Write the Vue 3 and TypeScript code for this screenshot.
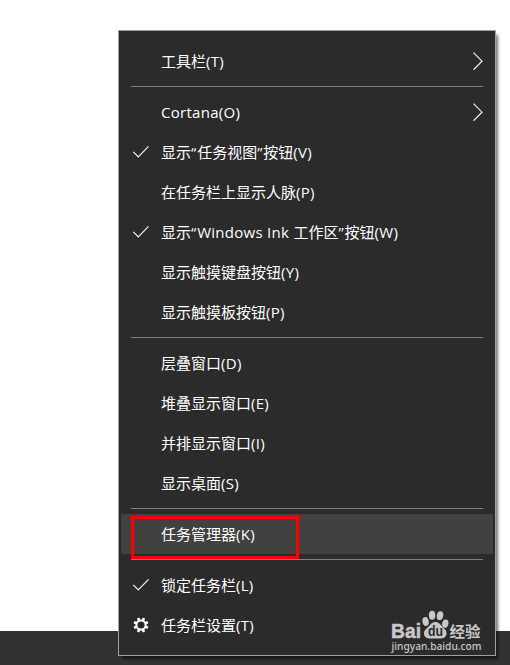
<script setup lang="ts">
interface Item {
  label: string
  icon?: 'check' | 'gear'
  submenu?: boolean
  active?: boolean
}

interface Run {
  text: string
  kind: 'cjk' | 'latin' | 'quote'
}

const groups: Item[][] = [
  [{ label: '工具栏(T)', submenu: true }],
  [
    { label: 'Cortana(O)', submenu: true },
    { label: '显示“任务视图”按钮(V)', icon: 'check' },
    { label: '在任务栏上显示人脉(P)' },
    { label: '显示“Windows Ink 工作区”按钮(W)', icon: 'check' },
    { label: '显示触摸键盘按钮(Y)' },
    { label: '显示触摸板按钮(P)' },
  ],
  [
    { label: '层叠窗口(D)' },
    { label: '堆叠显示窗口(E)' },
    { label: '并排显示窗口(I)' },
    { label: '显示桌面(S)' },
  ],
  [{ label: '任务管理器(K)', active: true }],
  [
    { label: '锁定任务栏(L)', icon: 'check' },
    { label: '任务栏设置(T)', icon: 'gear' },
  ],
]

// Latin letters and quotes are tracked slightly wider than the Chinese text.
function runs(label: string): Run[] {
  const parts = label.match(/[“”]|[\x20-\x7e]+|[^“”\x20-\x7e]+/g) ?? []
  return parts.map((text) => ({
    text,
    kind: /[“”]/.test(text) ? 'quote' : /[\x20-\x7e]/.test(text) ? 'latin' : 'cjk',
  }))
}

const teeth = [0, 45, 90, 135, 180, 225, 270, 315]
</script>

<template>
  <div class="screen">
    <div class="taskbar"></div>
    <nav class="menu">
      <div v-for="(group, g) in groups" :key="g" class="group">
        <div v-for="item in group" :key="item.label" class="row" :class="{ active: item.active }">
          <span class="icon">
            <svg v-if="item.icon === 'check'" width="18" height="16" viewBox="0 0 18 16">
              <path d="M1.3 7.8 L6.3 12.8 L16.5 2.4" fill="none" stroke="#f4f4f4" stroke-width="1.2" />
            </svg>
            <svg v-else-if="item.icon === 'gear'" class="gear" width="16" height="16" viewBox="-8 -8 16 16">
              <circle r="4.6" fill="none" stroke="#fff" stroke-width="2" />
              <rect
                v-for="angle in teeth"
                :key="angle"
                x="-1.35"
                y="-7.5"
                width="2.7"
                height="2.8"
                fill="#fff"
                :transform="`rotate(${angle + 22.5})`"
              />
            </svg>
          </span>
          <span class="label"><span v-for="(run, r) in runs(item.label)" :key="r" :class="run.kind">{{ run.text }}</span></span>
          <svg v-if="item.submenu" class="arrow" width="12" height="18" viewBox="0 0 12 18">
            <path d="M1.5 0.7 L10 9.2 L1.5 17.7" fill="none" stroke="#f4f4f4" stroke-width="1.2" />
          </svg>
          <span v-if="item.active" class="marker"></span>
        </div>
      </div>
    </nav>
    <svg class="watermark" width="96" height="48" viewBox="0 0 96 48">
      <g fill="#c8c8c8">
        <text class="brand" x="1" y="30" textLength="30" lengthAdjust="spacingAndGlyphs">Bai</text>
        <ellipse cx="35.6" cy="13.5" rx="3.1" ry="4.4" transform="rotate(-12 35.6 13.5)" />
        <ellipse cx="42.1" cy="7.3" rx="3.2" ry="4.5" />
        <ellipse cx="50" cy="7.7" rx="3.2" ry="4.4" transform="rotate(10 50 7.7)" />
        <ellipse cx="55.3" cy="15.7" rx="3.1" ry="4.2" transform="rotate(12 55.3 15.7)" />
        <path d="M45.5 14c3.3 0 4.8 2.6 7 5 2.3 2.200 4 3.300 4 6.300 0 3.200-2.300 5.200-5.500 5.200H39.500c-3.300 0-5.500-2-5.500-5.200 0-3 2-4.100 4.200-6.300 2.300-2.400 4-5 7.300-5z" />
      </g>
      <text class="du" x="38" y="28" textLength="15" lengthAdjust="spacingAndGlyphs">du</text>
      <text class="jing" x="59.5" y="29" textLength="31" lengthAdjust="spacingAndGlyphs">经验</text>
      <text class="url" x="1.5" y="42" textLength="90" lengthAdjust="spacingAndGlyphs">jingyan.baidu.com</text>
    </svg>
  </div>
</template>

<style>
body {
  background: #fff;
}
</style>

<style scoped>
.screen {
  position: relative;
  box-sizing: border-box;
  width: 510px;
  height: 665px;
  padding: 30px 14px 9px 118px;
  overflow: hidden;
}
.taskbar {
  position: absolute;
  left: 0;
  right: 0;
  bottom: 0;
  height: 34px;
  background: #323232;
}
.menu {
  position: relative;
  box-sizing: border-box;
  width: 378px;
  height: 626px;
  padding: 10px 2px;
  border: 1px solid #a0a0a0;
  background: #2b2b2b;
  box-shadow: 3px 4px 3px -1px rgba(0, 0, 0, 0.55);
}
.group + .group::before {
  content: '';
  display: block;
  height: 1px;
  margin: 5px 10px;
  background: #808080;
}
.row {
  position: relative;
  display: flex;
  align-items: center;
  height: 40px;
  color: #fff;
}
.row.active {
  background: #414141;
}
.icon {
  display: flex;
  flex: none;
  width: 29px;
  padding-left: 11px;
}
.gear {
  margin-left: 1px;
}
.label {
  flex: 1;
  font: 15px/20px 'Open Sans', 'Noto Sans CJK SC', sans-serif;
  white-space: pre;
}
.latin {
  letter-spacing: 0.28px;
}
.quote {
  letter-spacing: 0.9px;
}
.arrow {
  flex: none;
  margin: 0 9px 1px 0;
}
.marker {
  position: absolute;
  left: 10px;
  top: 2px;
  box-sizing: border-box;
  width: 168px;
  height: 43px;
  border: 3px solid #f00;
  z-index: 1;
}
.watermark {
  position: absolute;
  left: 390px;
  top: 608px;
  overflow: visible;
}
.brand {
  font: bold 20px 'Liberation Sans', sans-serif;
  stroke: #c8c8c8;
  stroke-width: 0.5px;
}
.du {
  font: bold 14px 'Liberation Sans', sans-serif;
  fill: #2b2b2b;
}
.jing {
  font: bold 15px 'Noto Sans CJK SC', sans-serif;
  fill: #c8c8c8;
}
.url {
  font: 500 11px 'Noto Sans', sans-serif;
  fill: #c8c8c8;
}
</style>
